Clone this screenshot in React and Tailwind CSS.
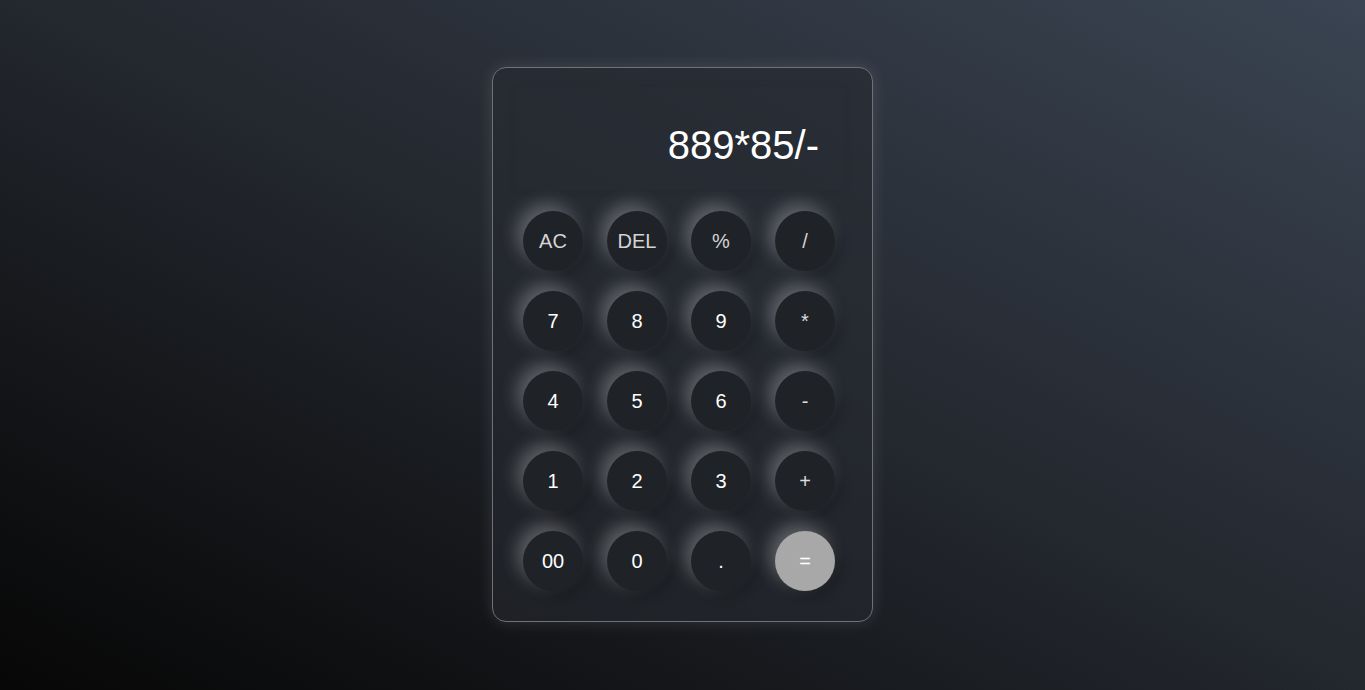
import React from "react";

const rows = [
  [["AC", "fn"], ["DEL", "fn"], ["%", "fn"], ["/", "fn"]],
  [["7", "num"], ["8", "num"], ["9", "num"], ["*", "op"]],
  [["4", "num"], ["5", "num"], ["6", "num"], ["-", "op"]],
  [["1", "num"], ["2", "num"], ["3", "num"], ["+", "op"]],
  [["00", "num"], ["0", "num"], [".", "num"], ["=", "eq"]],
];

function Key({ label, kind }) {
  const base =
    "w-[60px] h-[60px] rounded-full flex items-center justify-center text-[20px] leading-none shadow-[-6px_-7px_18px_rgba(255,255,255,0.28),5px_5px_12px_rgba(0,0,0,0.25)]";
  if (kind === "eq")
    return <div className={`${base} bg-[#a8a8a8] text-white`}>{label}</div>;
  const color =
    kind === "fn" ? "text-[#d4d4d6]" : kind === "op" ? "text-[#dcdcdc] text-[18px]" : "text-white";
  return <div className={`${base} bg-[#1f2227] ${color}`}>{label}</div>;
}

export default function App() {
  return (
    <div
      className="w-full h-[690px] flex items-center justify-center bg-gradient-to-tr from-[#070707] via-[#23272e] to-[#3a4452]"
      style={{ fontFamily: '"Liberation Sans", Arial, sans-serif' }}
    >
      <div className="w-[381px] h-[555px] mb-[1px] rounded-[14px] border border-[#6e7278] bg-[#262a31]/60 shadow-[0_0_16px_rgba(255,255,255,0.12)] flex flex-col">
        <div className="ml-[22px] mt-[19px] w-[330px] h-[103px] rounded-[6px] shadow-[0_0_8px_rgba(0,0,0,0.07)] flex justify-end pt-[38px] pr-[26px]">
          <span className="text-[40px] leading-[40px] text-white">889*85/-</span>
        </div>
        <div className="mt-[21px] ml-[30px] grid grid-cols-[repeat(4,60px)] gap-x-[24px] gap-y-[20px]">
          {rows.flat().map(([l, k], i) => (
            <Key key={i} label={l} kind={k} />
          ))}
        </div>
      </div>
    </div>
  );
}
